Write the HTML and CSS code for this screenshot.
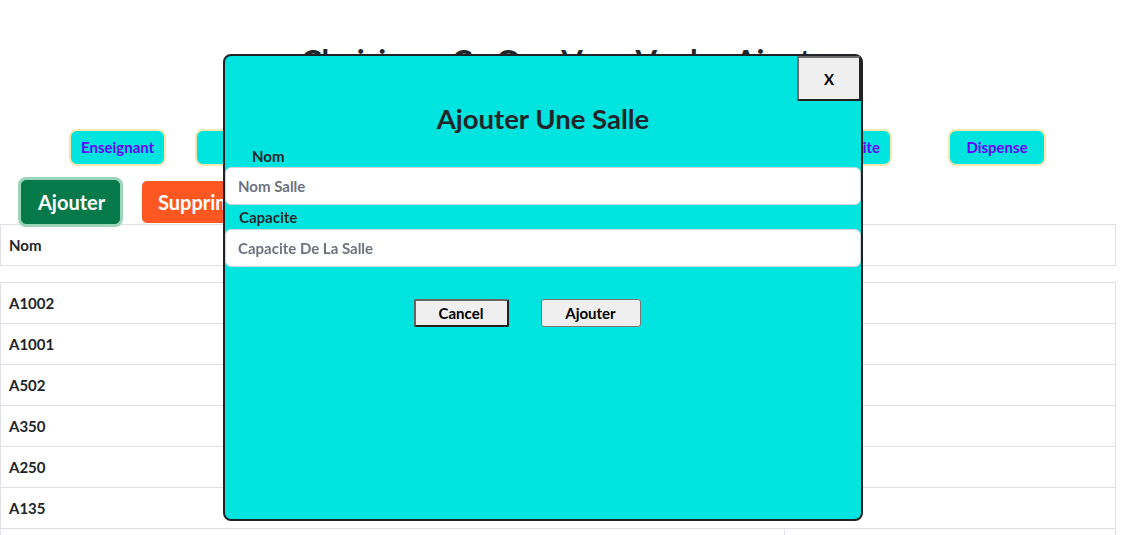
FILE: index.html
```html
<!DOCTYPE html>
<html lang="fr">
<head>
<meta charset="utf-8">
<title>Salles</title>
<link rel="stylesheet" href="styles.css">
</head>
<body>
<h1 class="page-title">Choisissez Ce Que Vous Voulez Ajouter</h1>

<nav class="nav">
  <button class="nav-btn nav-first">Enseignant</button>
  <button class="nav-btn nav-fill">Etudiant</button>
  <button class="nav-btn nav-fill">Groupe</button>
  <button class="nav-btn nav-fill">Salle</button>
  <button class="nav-btn nav-fill">Matiere</button>
  <button class="nav-btn">Specialite</button>
  <button class="nav-btn nav-last">Dispense</button>
</nav>

<div class="actions">
  <button class="btn-add">Ajouter</button>
  <button class="btn-del">Supprimer</button>
</div>

<table class="table table-head">
  <tr><th>Nom</th><th class="col2">Capacite</th></tr>
</table>

<table class="table table-body">
  <tr><td>A1002</td><td class="col2">40</td></tr>
  <tr><td>A1001</td><td class="col2">40</td></tr>
  <tr><td>A502</td><td class="col2">30</td></tr>
  <tr><td>A350</td><td class="col2">30</td></tr>
  <tr><td>A250</td><td class="col2">30</td></tr>
  <tr><td>A135</td><td class="col2">25</td></tr>
  <tr class="last"><td>A120</td><td class="col2">25</td></tr>
</table>

<div class="modal">
  <div class="modal-top">
    <button class="close-btn">X</button>
  </div>
  <h2 class="modal-title">Ajouter Une Salle</h2>
  <label class="lbl lbl-nom">Nom</label>
  <input class="field" type="text" placeholder="Nom Salle">
  <label class="lbl lbl-cap">Capacite</label>
  <input class="field" type="text" placeholder="Capacite De La Salle">
  <div class="modal-actions">
    <button class="m-btn m-cancel">Cancel</button>
    <button class="m-btn m-ok">Ajouter</button>
  </div>
</div>
</body>
</html>
```

FILE: styles.css
```css
* { box-sizing: border-box; }

body {
  margin: 0;
  font-family: "Lato", "Open Sans", sans-serif;
  color: #212529;
  background: #fff;
}

.page-title {
  margin: 0;
  padding-top: 41px;
  font-size: 31px;
  line-height: 38px;
  font-weight: 700;
  text-align: center;
  color: #212529;
}

.nav {
  display: flex;
  gap: 29px;
  margin-top: 50px;
  padding: 0 94px 0 69px;
}

.nav-btn {
  font-family: inherit;
  font-size: 15px;
  line-height: 17px;
  font-weight: 700;
  color: #6a00ff;
  background: #00e4e0;
  border: 2px solid #f6e7ad;
  border-radius: 8px;
  padding: 8px 10px;
}

.nav-first { width: 97px; }
.nav-fill { flex: 1; }
.nav-last { margin-left: 27px; width: 98px; }

.actions {
  display: flex;
  align-items: center;
  gap: 22px;
  margin-top: 14px;
  padding-left: 21px;
  height: 44px;
}

.btn-add, .btn-del {
  font-family: inherit;
  font-size: 20px;
  font-weight: 700;
  color: #fff;
  border-radius: 5px;
  padding: 0 16px;
}

.btn-add {
  position: relative;
  z-index: 1;
  height: 44px;
  width: 99px;
  background: #05794a;
  border: 1px solid #05794a;
  box-shadow: 0 0 0 3px #9cd4b9;
}

.btn-del {
  height: 42px;
  background: #ff5722;
  border: none;
}

.table {
  width: 1116px;
  border-collapse: collapse;
  font-size: 15px;
}

.table th, .table td {
  text-align: left;
  font-weight: 700;
  padding: 0 8px;
  height: 41px;
  border-top: 1px solid #dfe0e6;
  border-bottom: 1px solid #dfe0e6;
}

.table tr > :first-child { border-left: 1px solid #dfe0e6; width: 784px; }
.table tr > :last-child { border-right: 1px solid #dfe0e6; }

.col2 { color: transparent; }
.table .last .col2 { border-left: 1px solid #dfe0e6; }

.table-body { margin-top: 16px; }

.modal {
  position: fixed;
  left: 223px;
  top: 54px;
  width: 640px;
  height: 467px;
  background: #00e4e0;
  border: 2px solid #1f2328;
  border-radius: 8px;
  display: flex;
  flex-direction: column;
}

.modal-top {
  display: flex;
  justify-content: flex-end;
}

.close-btn {
  width: 64px;
  height: 45px;
  background: #efefef;
  border: 2px solid;
  border-color: #6b6b6b #222 #222 #6b6b6b;
  font-family: inherit;
  font-size: 15px;
  font-weight: 700;
  color: #000;
  padding: 0;
}

.modal-title {
  margin: 0;
  padding-top: 1px;
  text-align: center;
  font-size: 27.5px;
  line-height: 34px;
  font-weight: 700;
  color: #212529;
}

.lbl {
  display: block;
  font-size: 15px;
  font-weight: 700;
  color: #212529;
}

.lbl-nom { padding-left: 27px; line-height: 22px; margin-top: 9px; }
.lbl-cap { padding-left: 14px; line-height: 24px; }

.field {
  display: block;
  width: 100%;
  height: 38px;
  border: 1px solid #ced4da;
  border-radius: 6px;
  background: #fff;
  padding: 0 12px;
  font-family: inherit;
  font-size: 15px;
  font-weight: 700;
  color: #212529;
}

.field::placeholder { color: #6c737f; }

.modal-actions {
  display: flex;
  justify-content: center;
  gap: 32px;
  margin-top: 32px;
  padding-right: 32px;
}

.m-btn {
  height: 28px;
  background: #efefef;
  font-family: inherit;
  font-size: 15px;
  font-weight: 700;
  color: #000;
  border-radius: 2px;
}

.m-cancel { width: 95px; border: 2px solid #222; border-color: #666 #222 #222 #666; }
.m-ok { width: 100px; border: 1px solid #767676; border-radius: 3px; }
```
